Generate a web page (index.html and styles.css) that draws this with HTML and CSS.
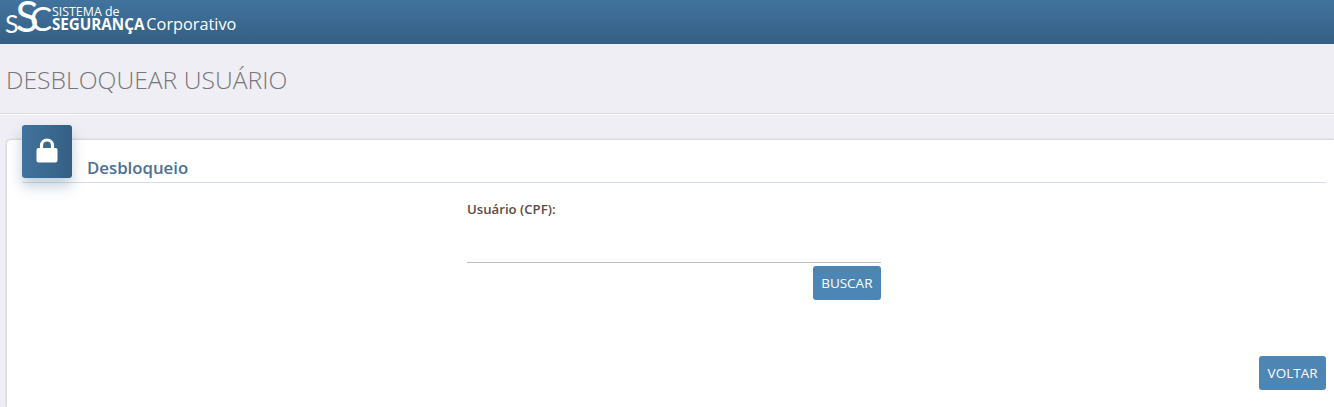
FILE: index.html
```html
<!DOCTYPE html>
<html lang="pt-BR">
<head>
  <meta charset="UTF-8">
  <title>Desbloquear Usuário</title>
  <link rel="stylesheet" href="styles.css">
</head>
<body>

  <!-- TOPO -->
  <header class="top-bar">
    <div class="logo">
      <span class="logo-mark"><span class="logo-s1">S</span><span class="logo-s2">S</span><span class="logo-c">C</span></span>
      <span class="logo-name">
        <span class="logo-line1">SISTEMA de</span>
        <span class="logo-line2">SEGURANÇA</span>
      </span>
      <span class="logo-corp">Corporativo</span>
    </div>
  </header>

  <div class="page-title">
    <h1>DESBLOQUEAR USUÁRIO</h1>
  </div>

  <main class="content">
    <section class="card">
      <div class="card-head">
        <div class="card-icon">
          <svg width="22" height="25" viewBox="0 0 22 25">
            <path d="M5.5 11V7.5a5.5 5.5 0 0 1 11 0V11" fill="none" stroke="#fff" stroke-width="3.2"/>
            <rect x="0.5" y="10" width="21" height="14.5" rx="2" fill="#fff"/>
          </svg>
        </div>
        <h2>Desbloqueio</h2>
      </div>

      <form class="search-form" onsubmit="return false">
        <label for="cpf">Usuário (CPF):</label>
        <input type="text" id="cpf">
        <div class="form-actions">
          <button class="btn">BUSCAR</button>
        </div>
      </form>

      <div class="card-actions">
        <button class="btn">VOLTAR</button>
      </div>
    </section>
  </main>

</body>
</html>
```

FILE: styles.css
```css
html, body {
  margin: 0;
  padding: 0;
  height: 100%;
  overflow: hidden;
  font-family: "Open Sans", "Noto Sans", sans-serif;
  background: #efeef4;
}

.top-bar {
  height: 44px;
  background: linear-gradient(to bottom, #41739d, #355f84);
  box-sizing: border-box;
  padding-left: 4px;
}

.logo {
  display: flex;
  align-items: flex-start;
  color: #fff;
}

/* as letras do logo se cruzam */
.logo-mark {
  display: flex;
  align-items: flex-start;
  width: 48px;
  height: 36px;
  font-family: "Lato", sans-serif;
  font-weight: 400;
}

.logo-s1 {
  font-size: 25px;
  line-height: 18px;
  margin: 14px 0 0 1px;
}

.logo-s2 {
  font-size: 43px;
  line-height: 32px;
  margin-left: -3px;
}

.logo-c {
  font-size: 33px;
  line-height: 24px;
  margin: 6px 0 0 -9px;
}

.logo-name {
  display: flex;
  flex-direction: column;
  padding-top: 6px;
}

.logo-line1 {
  font-size: 12.4px;
  line-height: 12px;
}

.logo-line2 {
  font-size: 15.2px;
  line-height: 13px;
  font-weight: 700;
}

.logo-corp {
  font-size: 16.3px;
  line-height: 20px;
  margin-left: 2px;
  padding-top: 14px;
}

.page-title {
  height: 70px;
  box-sizing: border-box;
  border-bottom: 1px solid #dcdce0;
  padding: 21px 0 0 6px;
}

.page-title h1 {
  margin: 0;
  font-size: 24.7px;
  line-height: 30px;
  font-weight: 300;
  color: #77777a;
}

.content {
  border-top: 1px solid #fff;
  padding: 25px 0 0 7px;
}

.card {
  background: #fff;
  border-radius: 4px 0 0 0;
  box-shadow: 0 0 3px rgba(0,0,0,0.25);
  height: 267px;
  box-sizing: border-box;
  padding: 0 8px 0 15px;
  display: flex;
  flex-direction: column;
}

.card-head {
  display: flex;
  align-items: flex-end;
  height: 42px;
  border-bottom: 1px solid #d5e0e8;
}

.card-icon {
  align-self: flex-start;
  width: 50px;
  height: 53px;
  margin-top: -15px;
  border-radius: 3px;
  background: linear-gradient(to right, #41739d, #355f84);
  box-shadow: 0 8px 14px rgba(53,95,132,0.3);
  display: flex;
  align-items: center;
  justify-content: center;
  flex-shrink: 0;
  padding-bottom: 3px;
  box-sizing: border-box;
}

.card-head h2 {
  margin: 0 0 2px 15px;
  font-size: 16.8px;
  line-height: 24px;
  font-weight: 600;
  color: #4a7096;
}

.search-form {
  width: 414px;
  margin: 17px 0 0 445px;
  display: flex;
  flex-direction: column;
}

.search-form label {
  font-size: 13.2px;
  line-height: 18px;
  font-weight: 600;
  color: #5a4a48;
}

.search-form input {
  height: 35px;
  margin-top: 9px;
  padding: 0;
  border: none;
  border-bottom: 1px solid #bdbdbd;
  outline: none;
  background: transparent;
}

.form-actions {
  display: flex;
  justify-content: flex-end;
  margin-top: 3px;
}

.card-actions {
  display: flex;
  justify-content: flex-end;
  margin-top: 56px;
}

.btn {
  height: 34px;
  padding: 0 8.5px;
  border: none;
  border-radius: 3px;
  background: #4d86b5;
  color: #fff;
  font-family: inherit;
  font-size: 13.5px;
  cursor: pointer;
}
```
